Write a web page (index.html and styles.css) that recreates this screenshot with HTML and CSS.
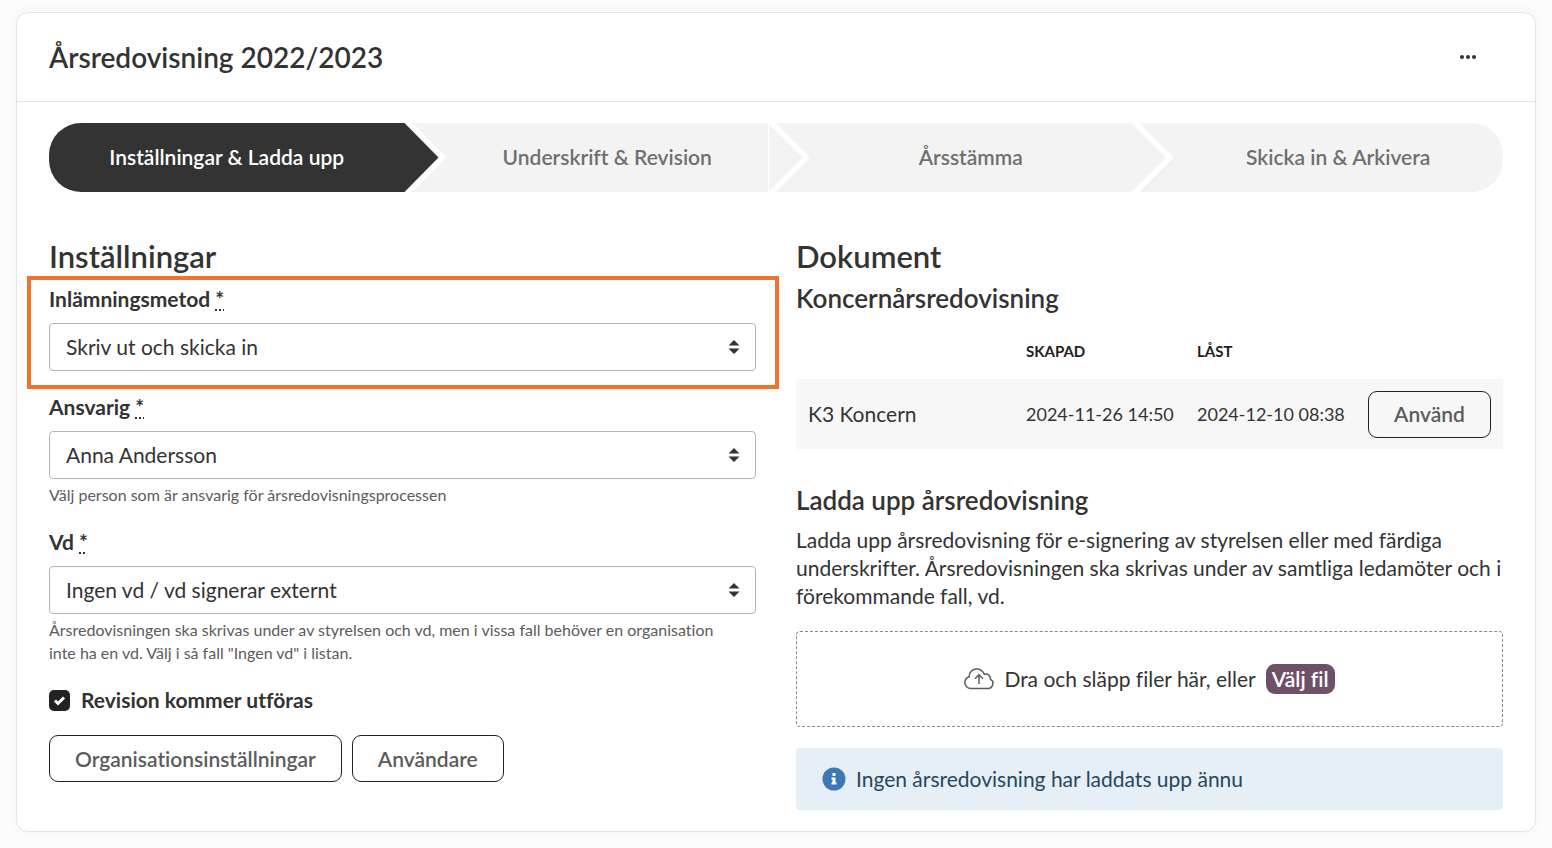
FILE: index.html
```html
<!DOCTYPE html>
<html lang="sv">
<head>
  <meta charset="UTF-8" />
  <meta name="viewport" content="width=device-width, initial-scale=1.0"/>
  <title>Årsredovisning 2022/2023</title>
  <link rel="stylesheet" href="styles.css">
</head>
<body>
  <main class="card">
    <header class="card-header">
      <h1>Årsredovisning 2022/2023</h1>
      <button class="menu-button" type="button" aria-label="Fler val">
        <svg width="16" height="4" viewBox="0 0 16 4"><circle cx="2" cy="2" r="2"/><circle cx="8" cy="2" r="2"/><circle cx="14" cy="2" r="2"/></svg>
      </button>
    </header>

    <div class="card-body">
      <ol class="steps">
        <li class="step active">Inställningar &amp; Ladda upp</li>
        <li class="step seam">Underskrift &amp; Revision</li>
        <li class="step">Årsstämma</li>
        <li class="step">Skicka in &amp; Arkivera</li>
      </ol>

      <div class="columns">
        <form class="settings">
          <h2>Inställningar</h2>

          <div class="field highlight">
            <label for="method">Inlämningsmetod <abbr title="obligatoriskt">*</abbr></label>
            <div class="select-wrap">
              <select id="method" name="method">
                <option>Skriv ut och skicka in</option>
              </select>
              <svg class="caret" width="12" height="14" viewBox="0 0 12 14"><path d="M6 0l5.5 5.5h-11zM6 14l5.5-5.5h-11z"/></svg>
            </div>
          </div>

          <div class="field">
            <label for="responsible">Ansvarig <abbr title="obligatoriskt">*</abbr></label>
            <div class="select-wrap">
              <select id="responsible" name="responsible">
                <option>Anna Andersson</option>
              </select>
              <svg class="caret" width="12" height="14" viewBox="0 0 12 14"><path d="M6 0l5.5 5.5h-11zM6 14l5.5-5.5h-11z"/></svg>
            </div>
            <p class="hint">Välj person som är ansvarig för årsredovisningsprocessen</p>
          </div>

          <div class="field">
            <label for="ceo">Vd <abbr title="obligatoriskt">*</abbr></label>
            <div class="select-wrap">
              <select id="ceo" name="ceo">
                <option>Ingen vd / vd signerar externt</option>
              </select>
              <svg class="caret" width="12" height="14" viewBox="0 0 12 14"><path d="M6 0l5.5 5.5h-11zM6 14l5.5-5.5h-11z"/></svg>
            </div>
            <p class="hint">Årsredovisningen ska skrivas under av styrelsen och vd, men i vissa fall behöver en organisation inte ha en vd. Välj i så fall "Ingen vd" i listan.</p>
          </div>

          <div class="check">
            <input type="checkbox" id="audit" name="audit" checked />
            <label for="audit">Revision kommer utföras</label>
          </div>

          <div class="buttons">
            <button class="button" type="button">Organisationsinställningar</button>
            <button class="button" type="button">Användare</button>
          </div>
        </form>

        <section class="documents">
          <h2>Dokument</h2>
          <h3>Koncernårsredovisning</h3>
          <table>
            <thead>
              <tr><th></th><th class="date">Skapad</th><th class="date">Låst</th><th class="action"></th></tr>
            </thead>
            <tbody>
              <tr>
                <td>K3 Koncern</td>
                <td class="date">2024-11-26 14:50</td>
                <td class="date">2024-12-10 08:38</td>
                <td><button class="button" type="button">Använd</button></td>
              </tr>
            </tbody>
          </table>

          <h3>Ladda upp årsredovisning</h3>
          <p class="intro">Ladda upp årsredovisning för e-signering av styrelsen eller med färdiga underskrifter. Årsredovisningen ska skrivas under av samtliga ledamöter och i förekommande fall, vd.</p>

          <div class="dropzone">
            <svg class="cloud" width="30" height="22" viewBox="0 0 30 22"><path d="M7 20.5h17a5 5 0 0 0 2.400-9.300c.3-3.500-2.800-5.900-6-4.800C18.800 3 15.900 1 12.700 1 8.300 1 5 4.400 5.200 8.700 2.500 9.700.8 12 .8 14.600c0 3.300 2.700 5.900 6.200 5.900z"/><path d="M15 16V7M11 10.800L15 6.800l4 4"/></svg>
            <span>Dra och släpp filer här, eller</span>
            <button class="file-button" type="button">Välj fil</button>
          </div>

          <div class="alert">
            <svg width="24" height="24" viewBox="0 0 24 24"><circle cx="12" cy="12" r="11.500" fill="#3d78b4"/><path fill="#fff" d="M10.500 6h3v3h-3zM9.500 10.500h4v5h1v2h-5v-2h1v-3h-1z"/></svg>
            <span>Ingen årsredovisning har laddats upp ännu</span>
          </div>
        </section>
      </div>
    </div>
  </main>
</body>
</html>
```
FILE: styles.css
```css
* {
  box-sizing: border-box;
}
body {
  font-family: Lato, sans-serif;
  font-size: 21px;
  font-variant-ligatures: none;
  line-height: 28px;
  color: #333;
  background: #fcfcfc;
  margin: 0;
  padding: 12px 16px 16px;
}
h1, h2, h3, p {
  margin: 0;
}
.card {
  background: white;
  border: 1px solid #e4e4e4;
  border-radius: 12px;
  box-shadow: 0 0 16px rgba(0,0,0,0.04);
}
.card-header {
  display: flex;
  align-items: center;
  justify-content: space-between;
  padding: 0 32px;
  height: 89px;
  border-bottom: 1px solid #e4e4e4;
}
h1 {
  font-size: 28px;
  font-weight: 600;
  line-height: 36px;
}
h2 {
  font-size: 31px;
  font-weight: 600;
  line-height: 36px;
}
h3 {
  font-size: 26px;
  font-weight: 600;
  line-height: 32px;
}
.menu-button {
  display: flex;
  padding: 16px 27px;
  border: none;
  background: none;
  fill: #333;
}
.card-body {
  padding: 21px 32px;
}

/* progress steps */
.steps {
  display: grid;
  grid-template-columns: repeat(4, 1fr);
  margin: 0;
  padding: 0;
  list-style: none;
  border-radius: 32px;
  overflow: hidden;
}
.step {
  position: relative;
  padding: 20px 8px 21px 34px;
  text-align: center;
  font-weight: 600;
  color: #6f6f6f;
  background: #f3f3f3;
}
.step:first-child {
  padding-left: 0;
}
.step:last-child {
  padding-right: 0;
}
.step:not(:last-child)::before,
.step:not(:last-child)::after {
  content: "";
  position: absolute;
  z-index: 1;
  top: 0;
  bottom: 0;
  left: calc(100% - 8px);
  width: 42px;
  background: white;
  clip-path: polygon(0 0, 8px 0, 100% 50%, 8px 100%, 0 100%);
}
.step:not(:last-child)::after {
  width: 34px;
  background: #f3f3f3;
  clip-path: polygon(0 0, 100% 50%, 0 100%);
}
.step.active {
  color: white;
  background: #333;
}
.step.active::after {
  background: #333;
}
.step.seam::after {
  border-left: 1px solid white;
}

.columns {
  display: grid;
  grid-template-columns: 1fr 1fr;
  gap: 40px;
  margin-top: 46px;
}

/* settings */
.field {
  position: relative;
  margin-bottom: 22px;
}
.field.highlight::before {
  content: "";
  position: absolute;
  inset: -9px -23px -18px -22px;
  border: 4px solid #ee7430;
  pointer-events: none;
}
.field label {
  display: block;
  margin-bottom: 10px;
  font-weight: bold;
}
.settings h2 {
  margin-bottom: 11px;
}
abbr {
  text-decoration: underline dotted;
}
.select-wrap {
  position: relative;
}
select {
  appearance: none;
  display: block;
  width: 100%;
  height: 48px;
  padding: 0 40px 0 16px;
  font: inherit;
  color: #333;
  background: white;
  border: 1px solid #b5b5b5;
  border-radius: 4px;
}
.caret {
  position: absolute;
  right: 16px;
  top: 17px;
  fill: #333;
  pointer-events: none;
}
.hint {
  margin-top: 4px;
  padding-right: 16px;
  font-size: 16px;
  line-height: 23px;
  color: #5c5c5c;
}
.check {
  display: flex;
  align-items: center;
  gap: 11px;
  font-weight: bold;
}
.check input {
  appearance: none;
  width: 21px;
  height: 21px;
  margin: 0;
  border-radius: 5px;
  background: #222 url("data:image/svg+xml,%3Csvg xmlns='http://www.w3.org/2000/svg' viewBox='0 0 21 21'%3E%3Cpath d='M6 10.500l3 3 6-6' fill='none' stroke='white' stroke-width='3'/%3E%3C/svg%3E");
}
.buttons {
  display: flex;
  gap: 10px;
  margin-top: 21px;
}
.button {
  height: 47px;
  padding: 0 25px;
  font: inherit;
  font-weight: 600;
  color: #5c5c5c;
  background: transparent;
  border: 1px solid #222;
  border-radius: 9px;
  cursor: pointer;
}

/* documents */
.documents h3 {
  margin-top: 8px;
}
table {
  width: 100%;
  margin: 9px 0 35px;
  border-collapse: collapse;
  table-layout: fixed;
}
th, td {
  padding: 11px 12px;
  text-align: left;
  white-space: nowrap;
}
th {
  height: 56px;
  font-size: 15px;
  text-transform: uppercase;
  color: #222;
}
th.date {
  width: 171px;
}
th.action {
  width: 147px;
}
td {
  height: 70px;
  background: #f7f7f7;
}
td.date {
  font-size: 18px;
}
td .button {
  display: block;
  width: 100%;
}
.intro {
  margin-top: 10px;
}
.dropzone {
  display: flex;
  align-items: center;
  justify-content: center;
  gap: 10px;
  height: 96px;
  margin-top: 21px;
  border: 1px dashed #888;
  border-radius: 4px;
}
.cloud {
  fill: none;
  stroke: #5c5c5c;
  stroke-width: 1.5;
}
.file-button {
  height: 30px;
  padding: 0 6px;
  font: inherit;
  font-weight: 600;
  line-height: 28px;
  color: white;
  background: #6f5069;
  border: none;
  border-radius: 9px;
  cursor: pointer;
}
.alert {
  display: flex;
  align-items: center;
  gap: 10px;
  height: 62px;
  margin-top: 21px;
  padding: 0 26px;
  color: #27475f;
  background: #e6eef6;
  border-radius: 4px;
}
```
